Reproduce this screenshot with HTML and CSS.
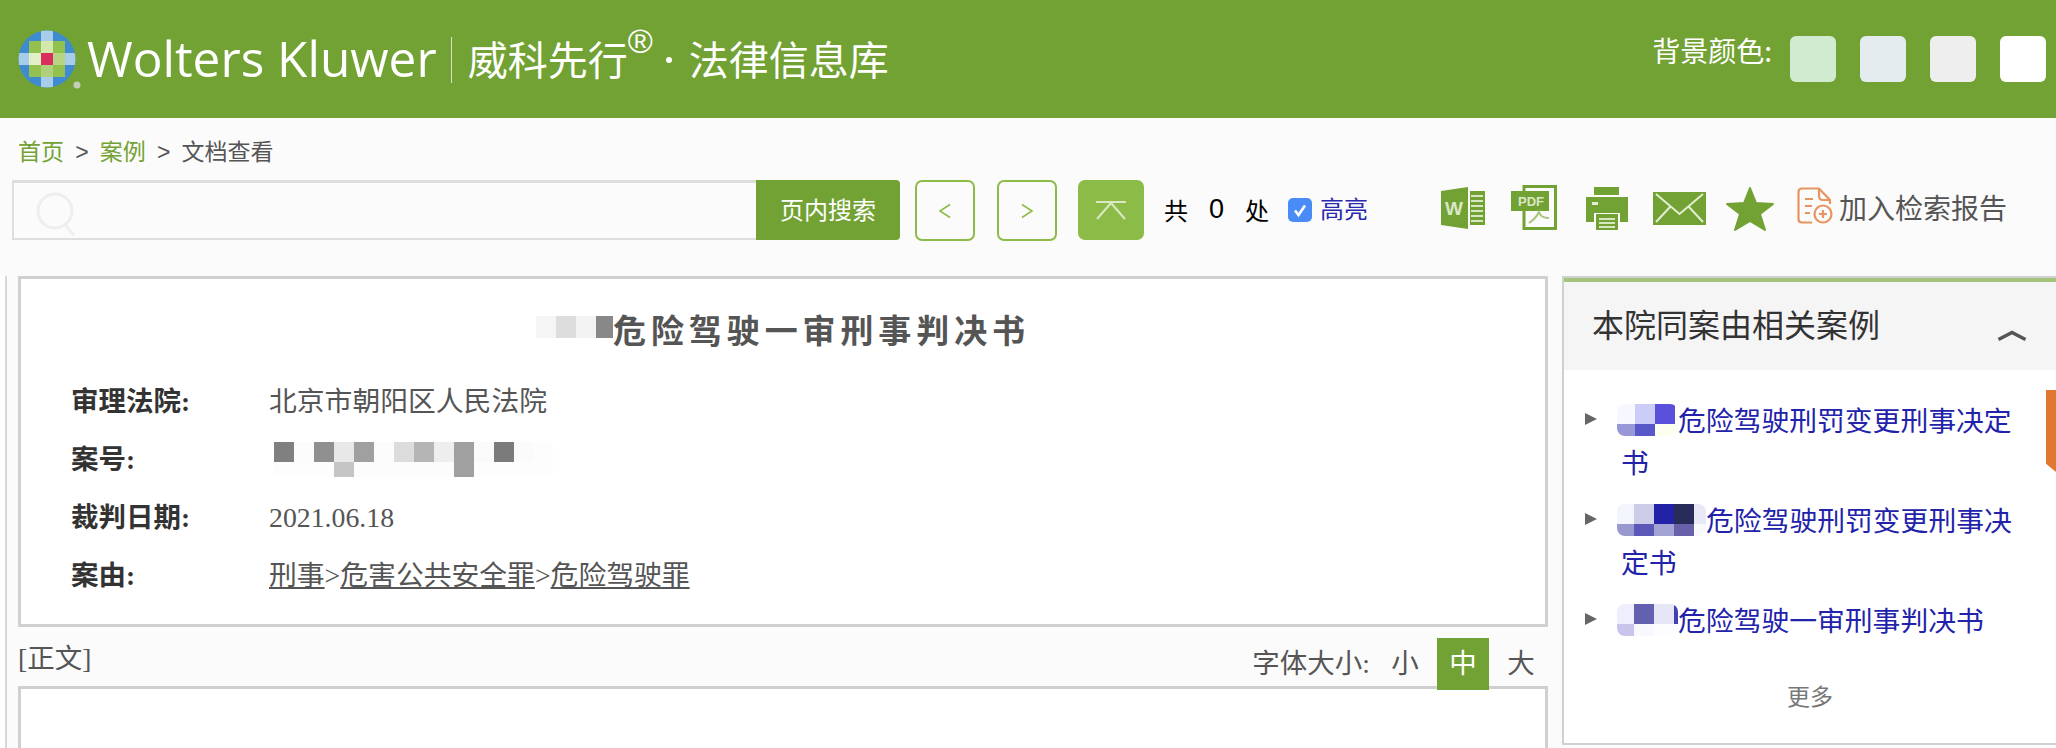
FILE: index.html
```html
<!DOCTYPE html>
<html lang="zh-CN">

<head>
    <meta charset="UTF-8">
    <title>文档查看</title>
    <link rel="stylesheet" href="styles.css">
</head>

<body>
    <header class="top-bar">
        <div class="brand">
            <svg class="brand-mark" viewBox="0 0 64 64">
                <defs>
                    <clipPath id="markClip">
                        <circle cx="30" cy="30" r="28.5"></circle>
                    </clipPath>
                </defs>
                <g clip-path="url(#markClip)">
                    <rect x="0" y="0" width="60" height="60" fill="#3f8bd0"></rect>
                    <rect x="24" y="0" width="12" height="60" fill="#a8cdea"></rect>
                    <rect x="0" y="24" width="60" height="12" fill="#a8cdea"></rect>
                    <rect x="12" y="12" width="36" height="36" fill="#93c150"></rect>
                    <rect x="24" y="12" width="12" height="12" fill="#d5e8ab"></rect>
                    <rect x="12" y="24" width="12" height="12" fill="#e3efc6"></rect>
                    <rect x="36" y="24" width="12" height="12" fill="#b6d483"></rect>
                    <rect x="24" y="36" width="12" height="12" fill="#afd07a"></rect>
                    <rect x="24" y="24" width="12" height="12" fill="#d92d5c"></rect>
                </g>
                <circle cx="60" cy="56" r="3.5" fill="#c5ccb8"></circle>
            </svg>
            <span class="brand-name">Wolters Kluwer</span>
            <span class="brand-line"></span>
            <span class="brand-cn">威科先行</span>
            <sup class="brand-reg">®</sup>
            <span class="brand-dot"></span>
            <span class="brand-cn">法律信息库</span>
        </div>
        <div class="bg-picker">
            <span class="bg-label">背景颜色:</span>
            <span class="swatch swatch-green"></span>
            <span class="swatch swatch-blue"></span>
            <span class="swatch swatch-gray"></span>
            <span class="swatch swatch-white"></span>
        </div>
    </header>

    <nav class="crumbs">
        <a href="#">首页</a> <span class="crumb-sep">&gt;</span> <a href="#">案例</a> <span class="crumb-sep">&gt;</span> 文档查看
    </nav>

    <div class="toolbar">
        <div class="search">
            <div class="search-field">
                <svg class="search-icon" viewBox="0 0 42 46">
                    <circle cx="20" cy="20" r="17"></circle>
                    <path d="M30 34 L39 44"></path>
                </svg>
            </div>
            <button type="button" class="search-btn">页内搜索</button>
        </div>
        <button type="button" class="nav-btn">
            <svg viewBox="0 0 16 16"><path d="M13 1.5 L3 8 L13 14.5"></path></svg>
        </button>
        <button type="button" class="nav-btn">
            <svg viewBox="0 0 16 16"><path d="M3 1.5 L13 8 L3 14.5"></path></svg>
        </button>
        <button type="button" class="top-btn">
            <svg viewBox="0 0 32 20"><path d="M1 2 H31 M16 3 L2 19 M16 3 L30 19"></path></svg>
        </button>
        <div class="hit-count"><span>共</span><span class="hit-num">0</span><span>处</span></div>
        <label class="hl-toggle">
            <svg class="hl-check" viewBox="0 0 24 24">
                <rect width="24" height="24" rx="5"></rect>
                <path d="M7 12.5 L10.5 17 L17 7.5"></path>
            </svg>
            高亮
        </label>
        <div class="tools">
            <svg class="tool tool-word" viewBox="0 0 44 42">
                <path class="solid" d="M0 4 L27 0 V42 L0 38 Z"></path>
                <path class="solid" d="M29 4 H44 V38 H29 Z"></path>
                <path class="pale" d="M30 9 H42 M30 14 H42 M30 19 H42 M30 24 H42 M30 29 H42 M30 34 H42"></path>
                <text class="tool-letter" x="4" y="28">W</text>
            </svg>
            <svg class="tool tool-pdf" viewBox="0 0 46 45">
                <path class="frame" d="M13 1.5 H44.5 V43.5 H13 Z"></path>
                <rect class="solid" x="0" y="6" width="38" height="20"></rect>
                <text class="tool-pdf-text" x="7" y="21">PDF</text>
                <path class="curl" d="M18 38 C24 34 27 29 28 27 C29 31 33 33 38 33"></path>
            </svg>
            <svg class="tool tool-print" viewBox="0 0 42 43">
                <rect class="solid" x="8" y="0" width="25" height="8"></rect>
                <path class="solid" d="M0 10 H42 V35 H34 V26 H8 V35 H0 Z"></path>
                <rect class="pale-fill" x="6" y="15" width="6" height="3"></rect>
                <rect class="solid" x="10" y="27" width="22" height="16"></rect>
                <path class="pale" d="M13 32 H29 M13 36 H29 M13 40 H29"></path>
            </svg>
            <svg class="tool tool-mail" viewBox="0 0 53 33">
                <rect class="solid" width="53" height="33"></rect>
                <path class="mail-line" d="M3 2 L26.5 22 L50 2 M3 30 L17 15 M50 30 L36 15"></path>
            </svg>
            <svg class="tool tool-star" viewBox="0 0 48 44">
                <path class="solid star-shape" d="M24 1 L30 16 L47 17 L34 27 L39 43 L24 34 L9 43 L14 27 L1 17 L18 16 Z"></path>
            </svg>
            <span class="report">
                <svg class="report-icon" viewBox="0 0 36 37">
                    <path d="M15 35.5 H5 Q1.5 35.5 1.5 32 V5 Q1.5 1.5 5 1.5 H22 L33 13 V17"></path>
                    <path d="M22 1.5 V9 Q22 13 26 13 H33"></path>
                    <path d="M8 12 H16 M8 19 H15 M8 26 H13"></path>
                    <circle cx="26" cy="27" r="8.5"></circle>
                    <path d="M26 23 V31 M22 27 H30"></path>
                </svg>
                <span class="report-text">加入检索报告</span>
            </span>
        </div>
    </div>

    <div class="content">
        <div class="edge-strip"></div>
        <main class="doc">
            <section class="doc-card">
                <h1 class="doc-title"><span class="mosaic mosaic-title"></span>危险驾驶一审刑事判决书</h1>
                <dl class="meta">
                    <dt>审理法院:</dt>
                    <dd>北京市朝阳区人民法院</dd>
                    <dt>案号:</dt>
                    <dd><span class="mosaic mosaic-no"></span></dd>
                    <dt>裁判日期:</dt>
                    <dd>2021.06.18</dd>
                    <dt>案由:</dt>
                    <dd><a href="#">刑事</a>&gt;<a href="#">危害公共安全罪</a>&gt;<a href="#">危险驾驶罪</a></dd>
                </dl>
            </section>
            <div class="doc-sub">
                <span class="doc-tag">[正文]</span>
                <div class="font-size">
                    <span class="font-label">字体大小:</span>
                    <span class="font-opt">小</span>
                    <span class="font-opt font-opt-on">中</span>
                    <span class="font-opt">大</span>
                </div>
            </div>
            <section class="doc-body"></section>
        </main>
        <aside class="side">
            <div class="side-head">
                <h2>本院同案由相关案例</h2>
                <svg class="side-toggle" viewBox="0 0 30 11"><path d="M1.5 9.5 L15 2.5 L28.5 9.5"></path></svg>
            </div>
            <ul class="side-list">
                <li><a href="#"><span class="mosaic mosaic-a"></span>危险驾驶刑罚变更刑事决定书</a></li>
                <li><a href="#"><span class="mosaic mosaic-b"></span>危险驾驶刑罚变更刑事决定书</a></li>
                <li><a href="#"><span class="mosaic mosaic-c"></span>危险驾驶一审刑事判决书</a></li>
            </ul>
            <div class="side-more">更多</div>
            <div class="side-tab"></div>
        </aside>
    </div>
</body>

</html>
```

FILE: styles.css
```css
/* Reset and base */
* {
    margin: 0;
    padding: 0;
    box-sizing: border-box;
}

html,
body {
    height: 100%;
    overflow: hidden;
}

body {
    background: #fbfbfb;
    color: #555;
    font-family: "Liberation Serif", "Noto Sans CJK SC", serif;
    font-size: 27px;
}

a {
    color: inherit;
    text-decoration: none;
}

button {
    font-family: inherit;
    cursor: pointer;
}

/* Top bar */
.top-bar {
    height: 118px;
    background: #72a234;
    display: flex;
    justify-content: space-between;
    align-items: flex-start;
    color: #fff;
}

.brand {
    display: flex;
    align-items: center;
    height: 118px;
    padding: 0 0 3px 17px;
}

.brand-mark {
    width: 64px;
    height: 64px;
    margin-top: 7px;
}

.brand-name {
    font-family: "Open Sans", sans-serif;
    font-weight: 400;
    font-size: 49.5px;
    margin-left: 6px;
}

.brand-line {
    width: 1px;
    height: 46px;
    margin: 4px 16px 0 14px;
    background: #d5e3c0;
}

.brand-cn {
    font-family: "Noto Sans CJK SC", sans-serif;
    font-weight: 400;
    font-size: 40px;
    line-height: 1;
}

.brand-reg {
    font-family: "Liberation Sans", sans-serif;
    font-size: 34px;
    line-height: 1;
    margin: -34px 0 0 0;
}

.brand-dot {
    width: 6px;
    height: 6px;
    margin: 4px 17px 0 13px;
    border-radius: 50%;
    background: #fff;
}

.bg-picker {
    display: flex;
    align-items: center;
    padding: 36px 10px 0 0;
}

.bg-label {
    font-family: "Noto Sans CJK SC", sans-serif;
    font-size: 28px;
    line-height: 30px;
    margin-top: -18px;
    margin-right: 18px;
}

.swatch {
    width: 46px;
    height: 46px;
    border-radius: 6px;
    margin-left: 24px;
}

.bg-label + .swatch {
    margin-left: 0;
}

.swatch-green {
    background: #d0ebd0;
}

.swatch-blue {
    background: #e5ecf0;
}

.swatch-gray {
    background: #eeeeee;
}

.swatch-white {
    background: #ffffff;
}

/* Breadcrumbs */
.crumbs {
    height: 62px;
    padding: 18px 0 0 18px;
    font-family: "Noto Sans CJK SC", sans-serif;
    font-size: 23px;
    line-height: 28px;
    color: #555;
}

.crumbs a {
    color: #72a234;
}

.crumb-sep {
    font-family: "Liberation Sans", sans-serif;
    margin: 0 6px;
}

/* Toolbar */
.toolbar {
    display: flex;
    align-items: flex-start;
    height: 96px;
    padding-left: 12px;
}

.search {
    display: flex;
    width: 888px;
    height: 60px;
}

.search-field {
    flex: 1;
    border: 2px solid #dedede;
    border-top-width: 3px;
    border-right: none;
    padding: 8px 0 0 21px;
}

.search-icon {
    width: 42px;
    height: 46px;
    fill: none;
    stroke: #eeeeee;
    stroke-width: 3;
}

.search-btn {
    width: 144px;
    padding-bottom: 4px;
    border: none;
    border-radius: 0 4px 4px 0;
    background: #72a234;
    color: #fff;
    font-family: "Noto Sans CJK SC", sans-serif;
    font-size: 24px;
}

.nav-btn {
    width: 60px;
    height: 61px;
    margin-left: 15px;
    border: 2px solid #8dbb47;
    border-radius: 7px;
    background: transparent;
    display: flex;
    align-items: center;
    justify-content: center;
}

.nav-btn + .nav-btn {
    margin-left: 22px;
}

.nav-btn svg {
    width: 16px;
    height: 16px;
    fill: none;
    stroke: #8dbb47;
    stroke-width: 1.6;
}

.top-btn {
    width: 66px;
    height: 60px;
    margin-left: 21px;
    border: none;
    border-radius: 7px;
    background: #8dbb47;
    display: flex;
    align-items: center;
    justify-content: center;
}

.top-btn svg {
    width: 32px;
    height: 20px;
    fill: none;
    stroke: #dbe9c2;
    stroke-width: 2;
}

.hit-count {
    display: flex;
    align-items: center;
    height: 60px;
    padding-bottom: 1px;
    margin-left: 20px;
    color: #000;
    font-family: "Noto Sans CJK SC", sans-serif;
    font-size: 24px;
}

.hit-num {
    font-family: "Liberation Sans", sans-serif;
    font-size: 27px;
    margin: 0 21px;
}

.hl-toggle {
    display: flex;
    align-items: center;
    height: 60px;
    margin-left: 19px;
    padding-bottom: 5px;
    color: #2a2ab0;
    font-family: "Noto Sans CJK SC", sans-serif;
    font-size: 24px;
    gap: 8px;
}

.hl-check {
    width: 24px;
    height: 24px;
    margin-top: 5px;
}

.hl-check rect {
    fill: #4a8cf7;
}

.hl-check path {
    fill: none;
    stroke: #fff;
    stroke-width: 2.6;
}

.tools {
    display: flex;
    align-items: flex-start;
    margin-left: 73px;
    padding-top: 6px;
}

.tool .solid {
    fill: #72a234;
}

.tool .pale {
    fill: none;
    stroke: #d9e6c4;
    stroke-width: 2;
}

.tool .pale-fill {
    fill: #e3eed2;
}

.tool-word {
    width: 44px;
    height: 42px;
    margin-top: 1px;
}

.tool-letter {
    fill: #dbe8c8;
    font-family: "Liberation Sans", sans-serif;
    font-weight: 700;
    font-size: 19px;
}

.tool-pdf {
    width: 46px;
    height: 45px;
    margin: -1px 0 0 26px;
}

.tool-pdf .frame {
    fill: #fbfbfb;
    stroke: #72a234;
    stroke-width: 3;
}

.tool-pdf-text {
    fill: #dbe8c8;
    font-family: "Liberation Sans", sans-serif;
    font-weight: 700;
    font-size: 13px;
}

.tool-pdf .curl {
    fill: none;
    stroke: #a5c47a;
    stroke-width: 2;
}

.tool-print {
    width: 42px;
    height: 43px;
    margin: 1px 0 0 29px;
}

.tool-mail {
    width: 53px;
    height: 33px;
    margin: 6px 0 0 25px;
}

.mail-line {
    fill: none;
    stroke: #e3eed2;
    stroke-width: 2;
}

.tool-star {
    width: 48px;
    height: 44px;
    margin: 1px 0 0 20px;
}

.star-shape {
    stroke: #72a234;
    stroke-width: 2;
    stroke-linejoin: round;
}

.report {
    display: flex;
    align-items: flex-start;
    margin-left: 23px;
    font-family: "Noto Sans CJK SC", sans-serif;
    font-size: 28px;
    line-height: 40px;
    color: #555;
}

.report-text {
    padding-top: 1px;
}

.report-icon {
    width: 36px;
    height: 37px;
    margin: 1px 6px 0 0;
    fill: none;
    stroke: #e89460;
    stroke-width: 2.2;
}

/* Main content */
.content {
    display: flex;
    align-items: flex-start;
}

.edge-strip {
    flex-shrink: 0;
    width: 7px;
    height: 480px;
    margin-right: 11px;
    background: #fff;
    border-right: 2px solid #d8d8d8;
}

.doc {
    flex-shrink: 0;
    width: 1530px;
}

.doc-card {
    height: 351px;
    padding-top: 28px;
    background: #fff;
    border: 3px solid #d0d0d0;
}

.doc-title {
    display: flex;
    justify-content: center;
    align-items: center;
    height: 44px;
    font-family: "Noto Sans CJK SC", sans-serif;
    font-size: 33px;
    line-height: 44px;
    font-weight: 700;
    letter-spacing: 4.9px;
    color: #555;
}

.meta {
    display: grid;
    grid-template-columns: 198px 1fr;
    grid-auto-rows: 58px;
    margin-top: 22px;
    padding-left: 50px;
    font-size: 27.5px;
    line-height: 58px;
}

.meta dt {
    font-weight: 700;
    color: #333;
}

.meta dd {
    color: #555;
    font-size: 27.8px;
}

.meta a {
    text-decoration: underline;
}

.doc-sub {
    display: flex;
    justify-content: space-between;
    height: 59px;
}

.doc-tag {
    padding: 14px 0 0 0;
    font-size: 27.5px;
    line-height: 36px;
}

.font-size {
    display: flex;
    align-items: flex-start;
    gap: 6px;
    padding: 11px 1px 0 0;
    font-size: 27.5px;
    line-height: 52px;
}

.font-label {
    margin-right: 3px;
}

.font-opt {
    width: 52px;
    height: 52px;
    text-align: center;
}

.font-opt-on {
    position: relative;
    z-index: 1;
    background: #72a234;
    color: #fff;
}

.doc-body {
    height: 300px;
    background: #fff;
    border: 3px solid #d0d0d0;
}

/* Side panel */
.side {
    position: relative;
    flex-shrink: 0;
    width: 494px;
    height: 469px;
    margin-left: 14px;
    background: #fff;
    border: 2px solid #d0d0d0;
    border-right: none;
}

.side-head {
    height: 92px;
    display: flex;
    justify-content: space-between;
    padding: 22px 29px 0 28px;
    background: #f5f5f5;
    border-top: 4px solid #a4c47a;
}

.side-head h2 {
    font-family: "Noto Sans CJK SC", sans-serif;
    font-weight: 400;
    font-size: 32px;
    line-height: 38px;
    color: #333;
}

.side-toggle {
    width: 30px;
    height: 11px;
    margin-top: 26px;
    fill: none;
    stroke: #555;
    stroke-width: 3.4;
}

.side-list {
    list-style: none;
    padding: 28px 26px 0 57px;
    font-family: "Noto Sans CJK SC", sans-serif;
    font-size: 27.8px;
    line-height: 42px;
    color: #2222aa;
}

.side-list li {
    position: relative;
    margin-bottom: 16px;
}

.side-list li::before {
    content: "";
    position: absolute;
    left: -36px;
    top: 15px;
    border-left: 12px solid #666;
    border-top: 6.5px solid transparent;
    border-bottom: 6.5px solid transparent;
}

.side-more {
    margin-top: 38px;
    text-align: center;
    font-family: "Noto Sans CJK SC", sans-serif;
    font-size: 23px;
    line-height: 34px;
    color: #777;
}

.side-tab {
    position: absolute;
    right: 0;
    top: 112px;
    width: 10px;
    height: 82px;
    background: #e07832;
    clip-path: polygon(0 0, 100% 0, 100% 100%, 0 90%);
}

/* Blurred-out text blocks */
.mosaic {
    display: inline-block;
    vertical-align: middle;
}

.mosaic-title {
    width: 77px;
    height: 22px;
    margin-top: -4px;
    background: linear-gradient(to right, #f5f5f5 20px, #dddddd 20px 40px, #f3f3f3 40px 60px, #888888 60px);
}

.mosaic-no {
    width: 279px;
    height: 35px;
    margin: -6px 0 0 5px;
    background:
        linear-gradient(to right, #808080 20px, #fcfcfc 20px 40px, #909090 40px 60px, #e8e8e8 60px 80px, #a0a0a0 80px 100px, #fcfcfc 100px 120px, #dcdcdc 120px 140px, #b5b5b5 140px 160px, #eeeeee 160px 180px, #a0a0a0 180px 200px, #fafafa 200px 220px, #7b7b7b 220px 240px, #fbfbfb 240px 260px, #fdfdfd 260px) top / 100% 20px no-repeat,
        linear-gradient(to right, #fdfdfd 60px, #c5c5c5 60px 80px, #fcfcfc 80px 180px, #a0a0a0 180px 200px, #fdfdfd 200px) bottom / 100% 15px no-repeat;
}

.mosaic-a,
.mosaic-b,
.mosaic-c {
    height: 32px;
    margin: -6px 0 0 -4px;
    border-radius: 8px;
}

.mosaic-a {
    width: 61px;
    background:
        linear-gradient(to right, #f7f7ff 18px, #ccccf8 18px 38px, #5a50dc 38px 58px, #fcfff0 58px) top / 100% 20px no-repeat,
        linear-gradient(to right, #9898d8 18px, #5858c8 18px 38px, #fcfff0 38px) bottom / 100% 12px no-repeat;
}

.mosaic-b {
    width: 89px;
    background:
        linear-gradient(to right, #f2f5fb 17px, #cccee8 17px 37px, #2222a8 37px 57px, #282c58 57px 77px, #e8e8f6 77px) top / 100% 20px no-repeat,
        linear-gradient(to right, #9a98d0 17px, #5c58b8 17px 37px, #a4a4d4 37px 57px, #6860a8 57px 77px, #f8f8ff 77px) bottom / 100% 12px no-repeat;
}

.mosaic-c {
    width: 61px;
    background:
        linear-gradient(to right, #eeeeff 17px, #6460b0 17px 37px, #e6e6f6 37px 57px, #4040b0 57px) top / 100% 20px no-repeat,
        linear-gradient(to right, #c8c4ec 17px, #f8f8ff 17px 37px, #fdfcff 37px) bottom / 100% 12px no-repeat;
}
```
